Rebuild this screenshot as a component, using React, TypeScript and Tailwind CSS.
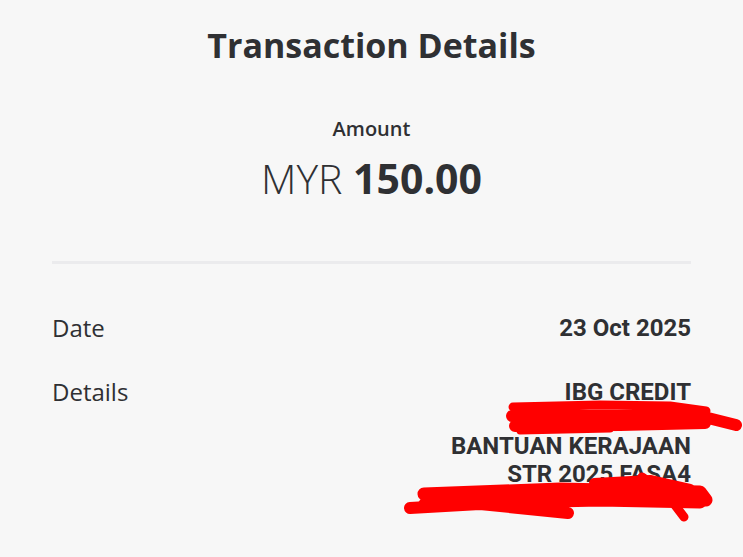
const ROWS = [
  { label: 'Date', value: ['23 Oct 2025'] },
  { label: 'Details', value: ['IBG CREDIT'] },
]

function Scribbles() {
  return (
    <svg
      className="pointer-events-none absolute inset-0"
      width="743"
      height="557"
      viewBox="0 0 743 557"
      fill="none"
      stroke="#ff0000"
      strokeLinecap="round"
      strokeLinejoin="round"
    >
      {/* under IBG CREDIT */}
      <path d="M513 407 L600 405 L670 406 L706 411" strokeWidth="9" />
      <path d="M512 416 L700 416 L736 425" strokeWidth="12" />
      <path d="M515 426 L620 425 L705 423" strokeWidth="12" />
      <path d="M520 431 L610 429" strokeWidth="7" />
      {/* under STR 2025 FASA4 */}
      <path d="M424 494 L560 489 L700 492 L706 500" strokeWidth="13" />
      <path d="M410 508 L480 504 L568 513" strokeWidth="12" />
      <path d="M425 504 L600 500 L700 502" strokeWidth="13" />
      <path d="M594 483 L650 480 L690 489" strokeWidth="10" />
      <path d="M642 477 L668 496 L684 517" strokeWidth="9" />
      <path d="M550 496 L650 492" strokeWidth="15" />
    </svg>
  )
}

export default function App() {
  return (
    <div className="relative h-[557px] w-[743px] overflow-hidden bg-[#f7f7f7] font-['Open_Sans',sans-serif] text-[#2f3033]">
      <h1 className="pt-[23px] text-center text-[34px] font-bold leading-[44px]">Transaction Details</h1>

      <div className="mt-[48px] flex flex-col items-center">
        <p className="text-[20px] font-semibold leading-[28px]">Amount</p>
        <p className="mt-[9px] text-[41px] leading-[52px]">
          <span className="font-light">MYR </span>
          <span className="font-bold">150.00</span>
        </p>
      </div>

      <div className="mx-[52px] mt-[57px] h-[3px] bg-[#ebebed]" />

      <div className="mx-[52px] mt-[48px] flex flex-col">
        {ROWS.map((row, i) => (
          <div key={row.label} className={`flex items-center justify-between ${i > 0 ? 'mt-[32px]' : ''}`}>
            <span className="text-[24px] leading-[32px]">{row.label}</span>
            <div className="flex flex-col items-end font-['Roboto',sans-serif] text-[24px] font-bold leading-[28px]">
              {row.value.map((line) => (
                <span key={line}>{line}</span>
              ))}
            </div>
          </div>
        ))}
        <div className="mt-[24px] flex flex-col items-end font-['Roboto',sans-serif] text-[24px] font-bold leading-[28px]">
          <span>BANTUAN KERAJAAN</span>
          <span>STR 2025 FASA4</span>
        </div>
      </div>

      <Scribbles />
    </div>
  )
}
